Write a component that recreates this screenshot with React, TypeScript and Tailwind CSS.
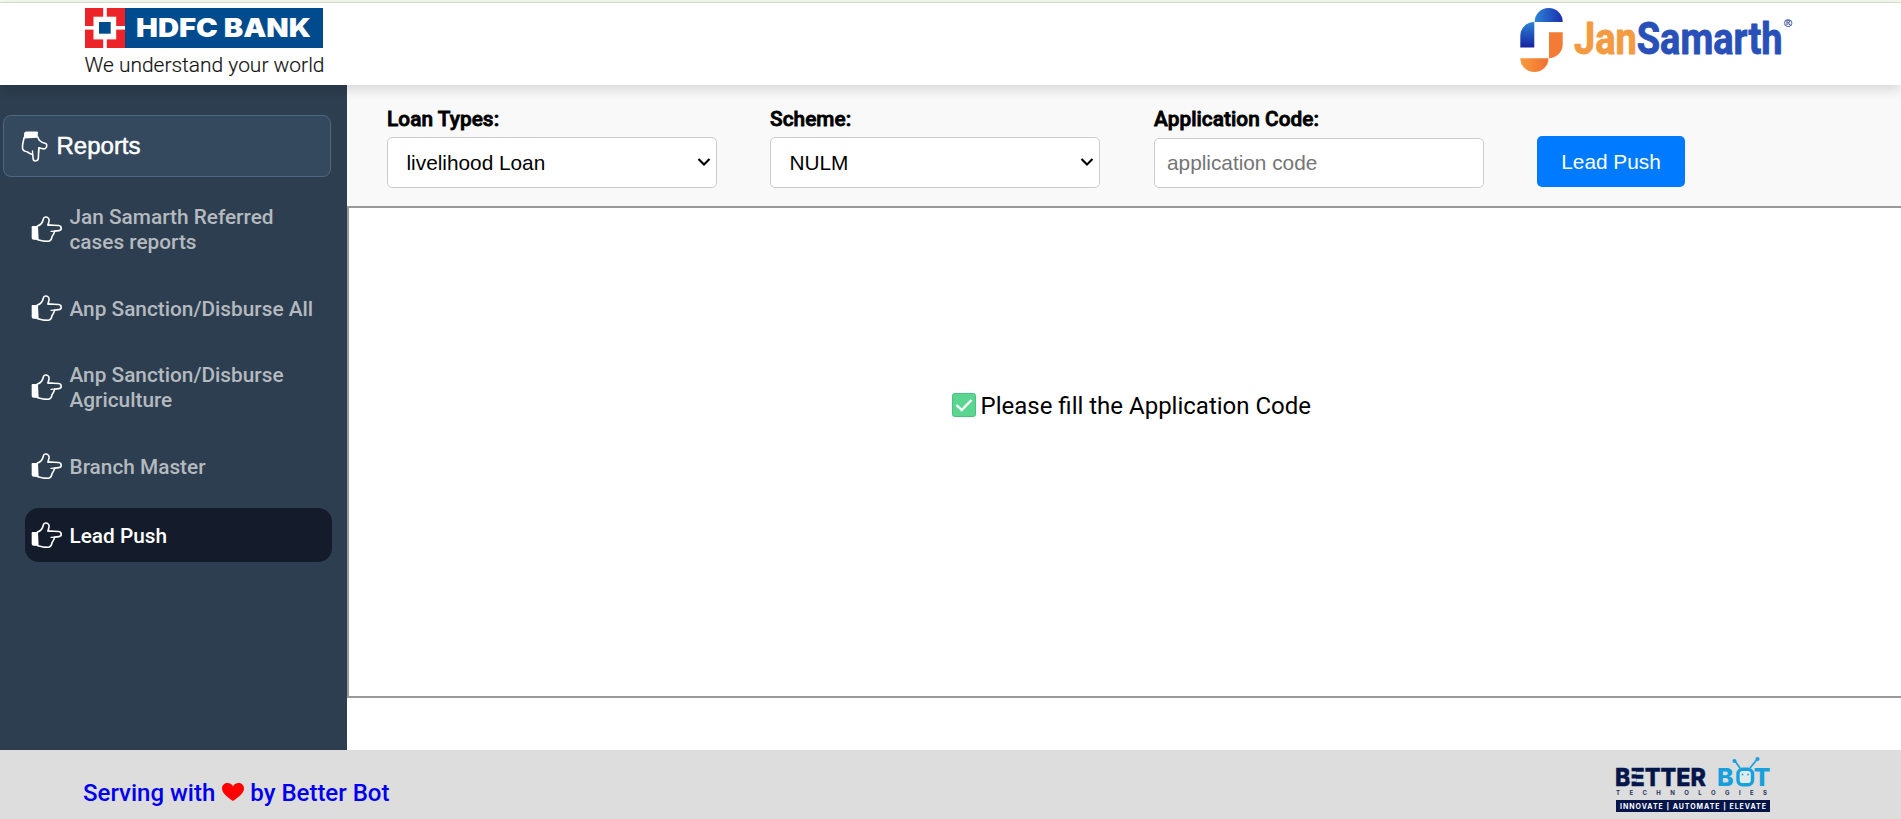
import React, { useState } from 'react';

function HandIcon({ className = '' }: { className?: string }) {
  return (
    <svg viewBox="0 0 93 80" className={`h-[26.67px] w-[31px] shrink-0 ${className}`} fill="none">
      <path
        d="M19 30C27 28 35 19 37 9C38 4 41 2.500 45 3C52 4 55 9 54 15L51 27L83 28.500C93 30 93 43 84 44L71 45.500C69 54 66 57 63 62C62 70 59 75 52 76L40 75.500L20 71"
        stroke="#fff"
        strokeWidth="4.800"
        strokeLinejoin="round"
        strokeLinecap="round"
      />
      <path d="M51 27L66 28M60 46L71 45.500" stroke="#fff" strokeWidth="4" strokeLinecap="round" />
      <path d="M4 30H21L23 72L7 71Q2 70 2 65V34Q2 30 4 30Z" fill="#fff" />
    </svg>
  );
}

function HdfcLogo() {
  return (
    <svg width="245" height="74" viewBox="82 5 245 74">
      <rect x="85" y="8" width="238" height="40" fill="#004b8d" />
      <rect x="85" y="8" width="40" height="40" fill="#ed232a" />
      <rect x="103.200" y="8" width="3.600" height="40" fill="#fff" />
      <rect x="85" y="26" width="40" height="3.600" fill="#fff" />
      <rect x="93.500" y="16.700" width="22.700" height="22.700" fill="#fff" />
      <rect x="99" y="22" width="11.700" height="11.700" fill="#004b8d" />
      <text x="136" y="37" textLength="175" lengthAdjust="spacingAndGlyphs" fontFamily="Inter, sans-serif" fontWeight="900" fontSize="25.500" fill="#fff">
        HDFC BANK
      </text>
      <text x="84.500" y="71.800" textLength="240" lengthAdjust="spacingAndGlyphs" fontFamily="Roboto, sans-serif" fontWeight="300" fontSize="20.500" fill="#111" stroke="#111" strokeWidth="0.150">
        We understand your world
      </text>
    </svg>
  );
}

function JanSamarthLogo() {
  return (
    <svg width="280" height="70" viewBox="1515 5 280 70" className="overflow-visible">
      <defs>
        <linearGradient id="blueA" x1="0" y1="0" x2="1" y2="0">
          <stop offset="0" stopColor="#2b84d6" />
          <stop offset="1" stopColor="#1a2fae" />
        </linearGradient>
        <linearGradient id="blueB" x1="0" y1="0" x2="0" y2="1">
          <stop offset="0" stopColor="#2b84d6" />
          <stop offset="1" stopColor="#1522a0" />
        </linearGradient>
        <linearGradient id="orangeA" x1="0" y1="0" x2="1" y2="0">
          <stop offset="0" stopColor="#f79a3c" />
          <stop offset="1" stopColor="#f26f33" />
        </linearGradient>
      </defs>
      <path d="M1534.700 22A14 14 0 0 1 1562.700 22Z" fill="url(#blueA)" />
      <path d="M1520.300 47.500V36A14 14 0 0 1 1534.300 22V47.500Z" fill="url(#blueB)" />
      <path d="M1549 32.300H1562.700V44.300A14 14 0 0 1 1549 58.300Z" fill="#f47b36" />
      <path d="M1520.300 58.300H1548.500A14 13.700 0 0 1 1520.300 58.300Z" fill="url(#orangeA)" />
      <text x="1574" y="53.500" textLength="208.500" lengthAdjust="spacingAndGlyphs" fontFamily="Roboto, sans-serif" fontWeight="700" fontSize="44.500" strokeWidth="0.900" strokeLinejoin="round">
        <tspan fill="#f49b42" stroke="#f49b42">Jan</tspan>
        <tspan fill="#2850b8" stroke="#2850b8">Samarth</tspan>
      </text>
      <text x="1784" y="27" fontFamily="Liberation Sans, sans-serif" fontSize="11" fill="#2b3f94" stroke="#2b3f94" strokeWidth="0.200">
        ®
      </text>
    </svg>
  );
}

function BetterBotLogo() {
  return (
    <svg width="160" height="60" viewBox="1612 756 160 60">
      <text x="1615" y="785.500" textLength="91" lengthAdjust="spacingAndGlyphs" fontFamily="Inter, sans-serif" fontWeight="800" fontSize="25" fill="#04154a" stroke="#04154a" strokeWidth="0.400">
        BETTER
      </text>
      <g fill="#ddd">
        <rect x="1629.500" y="771.300" width="6.500" height="3" />
        <rect x="1629.500" y="778.500" width="6.500" height="3" />
      </g>
      <text x="1717 1735.500 1753.500" y="786" fontFamily="Inter, sans-serif" fontWeight="800" fontSize="25" fill="#18a0dc">
        BOT
      </text>
      <rect x="1735.300" y="766" width="19" height="21" fill="#ddd" />
      <rect x="1738" y="769.300" width="14.500" height="15.500" rx="4.500" fill="#e0eaef" stroke="#18a0dc" strokeWidth="3.400" />
      <g stroke="#18a0dc" strokeWidth="1.700" fill="#18a0dc">
        <path d="M1740 768L1735 761M1750 768L1757 759.500" />
        <circle cx="1734.500" cy="761" r="1.200" />
        <circle cx="1757.500" cy="759" r="1.200" />
      </g>
      <circle cx="1742.500" cy="774.500" r="0.900" fill="#18a0dc" />
      <circle cx="1748" cy="774.500" r="0.900" fill="#18a0dc" />
      <text x="1616" y="795" textLength="151" fontFamily="Inter, sans-serif" fontWeight="700" fontSize="6" fill="#26335f">
        TECHNOLOGIES
      </text>
      <rect x="1616" y="800" width="154" height="12" fill="#04154a" />
      <text x="1620" y="808.900" textLength="146" fontFamily="Inter, sans-serif" fontWeight="700" fontSize="7" fill="#fff">
        INNOVATE | AUTOMATE | ELEVATE
      </text>
    </svg>
  );
}

const menu = [
  'Jan Samarth Referred cases reports',
  'Anp Sanction/Disburse All',
  'Anp Sanction/Disburse Agriculture',
  'Branch Master',
  'Lead Push',
];

function Label({ children }: { children: React.ReactNode }) {
  return (
    <label className="block h-[30px] text-[20.8px] leading-[25px] font-medium tracking-[0.05px] text-black [-webkit-text-stroke:0.8px_#000]">
      {children}
    </label>
  );
}

function SelectField({ label, options }: { label: string; options: string[] }) {
  return (
    <div className="w-[330px]">
      <Label>{label}</Label>
      <div className="relative">
        <select className="block h-[51px] w-full appearance-none rounded-[5px] border border-[#ccc] bg-white pl-[18.5px] font-['Liberation_Sans',sans-serif] text-[20.8px] text-black outline-none">
          {options.map((o) => (
            <option key={o}>{o}</option>
          ))}
        </select>
        <svg className="pointer-events-none absolute top-[20px] right-[6px] h-[10px] w-[14px]" viewBox="0 0 14 10" fill="none">
          <path d="M1.500 2L7 7.500L12.500 2" stroke="#000" strokeWidth="2.100" />
        </svg>
      </div>
    </div>
  );
}

export default function App() {
  const [active, setActive] = useState(4);
  return (
    <div className="flex h-[819px] w-full flex-col overflow-hidden bg-white font-['Roboto',sans-serif]">
      <div className="h-[3px] shrink-0 border-b border-[#dbe5c8] bg-[#f6f9f0]" />
      <header className="relative z-10 flex h-[82px] shrink-0 justify-between bg-white pt-[2px] pr-[106px] pl-[82px] shadow-[0_4px_12px_rgba(0,0,0,0.15)]">
        <HdfcLogo />
        <JanSamarthLogo />
      </header>

      <div className="flex h-[665px] shrink-0">
        <aside className="w-[347px] shrink-0 bg-[#2d3e50] pt-[30px] pl-[3px]">
          <button className="flex h-[62px] w-[328px] items-center rounded-[8px] border border-[#4f6880] bg-[#34495e] pl-[14.5px] text-left">
            <HandIcon className="rotate-90" />
            <span className="ml-[7px] font-['Liberation_Sans',sans-serif] text-[24px] leading-[30px] text-white [-webkit-text-stroke:0.5px_#fff]">
              Reports
            </span>
          </button>
          <nav className="mt-[15px] ml-[22px] flex w-[307px] flex-col gap-[15px]">
            {menu.map((m, i) => (
              <button
                key={m}
                onClick={() => setActive(i)}
                className={
                  i === active
                    ? 'flex min-h-[54px] items-center gap-[7.5px] rounded-[14px] bg-[#141c2b] py-[12px] pr-[10px] pl-[6px] text-left text-[20.8px] leading-[25px] font-medium text-white'
                    : 'flex min-h-[54px] items-center gap-[7.5px] rounded-[14px] py-[12px] pr-[10px] pl-[6px] text-left text-[20.8px] leading-[25px] font-medium text-[#b4babf]'
                }
              >
                <HandIcon />
                <span className="mt-[1px] -mb-[1px]">{m}</span>
              </button>
            ))}
          </nav>
        </aside>

        <main className="min-w-0 flex-1">
          <div className="flex h-[121px] bg-[#f9f9f9] pt-[22px] pl-[40px]">
            <SelectField label="Loan Types:" options={['livelihood Loan']} />
            <div className="w-[53px]" />
            <SelectField label="Scheme:" options={['NULM']} />
            <div className="w-[54px]" />
            <div className="w-[330px]">
              <Label>Application Code:</Label>
              <input
                placeholder="application code"
                className="mt-px block h-[50px] w-full rounded-[5px] border border-[#ccc] bg-white px-[12px] font-['Liberation_Sans',sans-serif] text-[20.8px] text-black outline-none placeholder:text-[#757575]"
              />
            </div>
            <button className="mt-[29px] ml-[53px] h-[51px] w-[148px] rounded-[5px] bg-[#007bff] font-['Liberation_Sans',sans-serif] text-[20.8px] text-white">
              Lead Push
            </button>
          </div>
          <section className="flex h-[492px] border-t-2 border-b-2 border-l-2 border-[#999] pt-[184px] pl-[603px]">
            <svg className="mt-[1px] h-[24px] w-[24px]" viewBox="0 0 24 24" fill="none">
              <rect x="0.500" y="0.500" width="23" height="23" rx="2" fill="#5bd691" stroke="#4cc282" />
              <path d="M4.500 12L9.700 17L19.500 7" stroke="#fff" strokeWidth="2.400" />
            </svg>
            <p className="ml-[4.5px] text-[24px] leading-[28px] text-black">Please fill the Application Code</p>
          </section>
        </main>
      </div>

      <footer className="flex h-[69px] shrink-0 justify-between bg-[#ddd] pr-[129px] pl-[83px]">
        <p className="flex pt-[28px] text-[24px] leading-[30px] font-medium text-[#0000ee]">
          Serving with
          <svg className="mt-[5px] mr-[6px] ml-[7px] h-[18px] w-[22px]" viewBox="0 0 22 18">
            <path d="M11 18C6 14.500 0 10.500 0 5.500C0 -0.500 8 -1.800 11 3.200C14 -1.800 22 -0.500 22 5.500C22 10.500 16 14.500 11 18Z" fill="#f00" />
          </svg>
          by Better Bot
        </p>
        <div className="pt-[6px]">
          <BetterBotLogo />
        </div>
      </footer>
    </div>
  );
}
